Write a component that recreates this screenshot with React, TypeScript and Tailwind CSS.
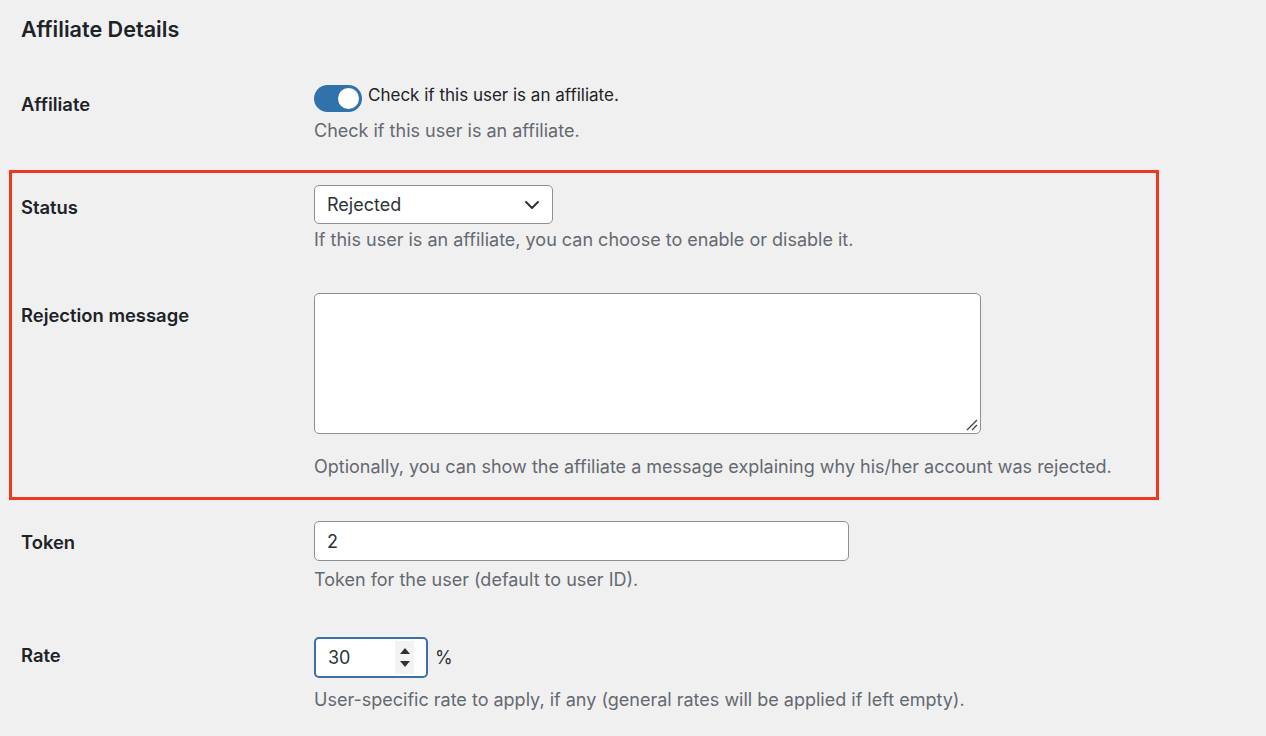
import React from 'react';

const font = { fontFamily: 'Inter, "Noto Sans", sans-serif' };

const Label = ({ children, pt }: { children: React.ReactNode; pt: string }) => (
  <div className={`w-[293px] shrink-0 text-[18.4px] leading-[24px] font-semibold text-[#1d2327] ${pt}`}>
    {children}
  </div>
);

const Desc = ({ children, mt }: { children: React.ReactNode; mt: string }) => (
  <p className={`text-[18px] leading-[24px] text-[#646970] ${mt}`}>{children}</p>
);

export default function App() {
  return (
    <div className="min-h-[736px] w-[1266px] bg-[#f0f0f1] overflow-hidden" style={font}>
      {/* Header */}
      <h2 className="pl-[21px] pt-[15px] text-[21.6px] leading-[28px] font-semibold text-[#1d2327]">
        Affiliate Details
      </h2>

      {/* Affiliate toggle */}
      <div className="flex pl-[21px] mt-[27px]">
        <Label pt="pt-[22px]">Affiliate</Label>
        <div className="pt-[15px]">
          <div className="flex items-start gap-[6px]">
            <div className="w-[48px] h-[27px] rounded-full bg-[#3272ab] flex items-center justify-end px-[3px]">
              <div className="w-[21px] h-[21px] rounded-full bg-white" />
            </div>
            <span className="text-[17px] leading-[20px] text-[#1d2327]">Check if this user is an affiliate.</span>
          </div>
          <Desc mt="mt-[7px]">Check if this user is an affiliate.</Desc>
        </div>
      </div>

      {/* Highlighted block */}
      <div className="ml-[9px] mt-[27px] w-[1150px] border-[3px] border-[#ec3a20] pl-[9px] pb-[18px]">
        <div className="flex">
          <Label pt="pt-[22px]">Status</Label>
          <div className="pt-[12px]">
            <div className="w-[239px] h-[39px] bg-white border border-[#8c8f94] rounded-[5px] flex items-center justify-between pl-[12px] pr-[12px]">
              <span className="text-[18px] text-[#2c3338]">Rejected</span>
              <svg width="16" height="10" viewBox="0 0 16 10" fill="none">
                <path d="M2 2l6 6 6-6" stroke="#2c3338" strokeWidth="2" strokeLinecap="round" strokeLinejoin="round" />
              </svg>
            </div>
            <Desc mt="mt-[4px]">If this user is an affiliate, you can choose to enable or disable it.</Desc>
          </div>
        </div>

        <div className="flex mt-[41px]">
          <Label pt="pt-[10px]">Rejection message</Label>
          <div>
            <div className="relative w-[667px] h-[141px] bg-white border border-[#8c8f94] rounded-[5px]">
              <textarea className="w-full h-full resize-none bg-transparent outline-none" />
              <svg className="absolute right-[2px] bottom-[2px]" width="14" height="14" viewBox="0 0 14 14">
                <path d="M3 13L13 3M8 13L13 8" stroke="#3c434a" strokeWidth="1.3" />
              </svg>
            </div>
            <Desc mt="mt-[21px]">
              Optionally, you can show the affiliate a message explaining why his/her account was rejected.
            </Desc>
          </div>
        </div>
      </div>

      {/* Token */}
      <div className="flex pl-[21px] mt-[21px]">
        <Label pt="pt-[9px]">Token</Label>
        <div>
          <div className="w-[535px] h-[40px] bg-white border border-[#8c8f94] rounded-[5px] flex items-center pl-[12px]">
            <span className="text-[18px] text-[#2c3338]">2</span>
          </div>
          <Desc mt="mt-[7px]">Token for the user (default to user ID).</Desc>
        </div>
      </div>

      {/* Rate */}
      <div className="flex pl-[21px] mt-[45px]">
        <Label pt="pt-[6px]">Rate</Label>
        <div>
          <div className="flex items-center gap-[7px]">
            <div className="w-[114px] h-[41px] bg-white border-2 border-[#3d6fa8] rounded-[5px] flex items-center justify-between pl-[12px] pr-[12px]">
              <span className="text-[18px] text-[#2c3338]">30</span>
              <div className="w-[19px] h-[33px] bg-[#f3f3f3] flex flex-col items-center justify-center gap-[7px]">
                <svg width="10" height="6" viewBox="0 0 10 6"><path d="M5 0L10 6H0z" fill="#2c3338" /></svg>
                <svg width="10" height="6" viewBox="0 0 10 6"><path d="M0 0h10L5 6z" fill="#2c3338" /></svg>
              </div>
            </div>
            <span className="text-[18px] text-[#2c3338]">%</span>
          </div>
          <Desc mt="mt-[10px]">User-specific rate to apply, if any (general rates will be applied if left empty).</Desc>
        </div>
      </div>
    </div>
  );
}
